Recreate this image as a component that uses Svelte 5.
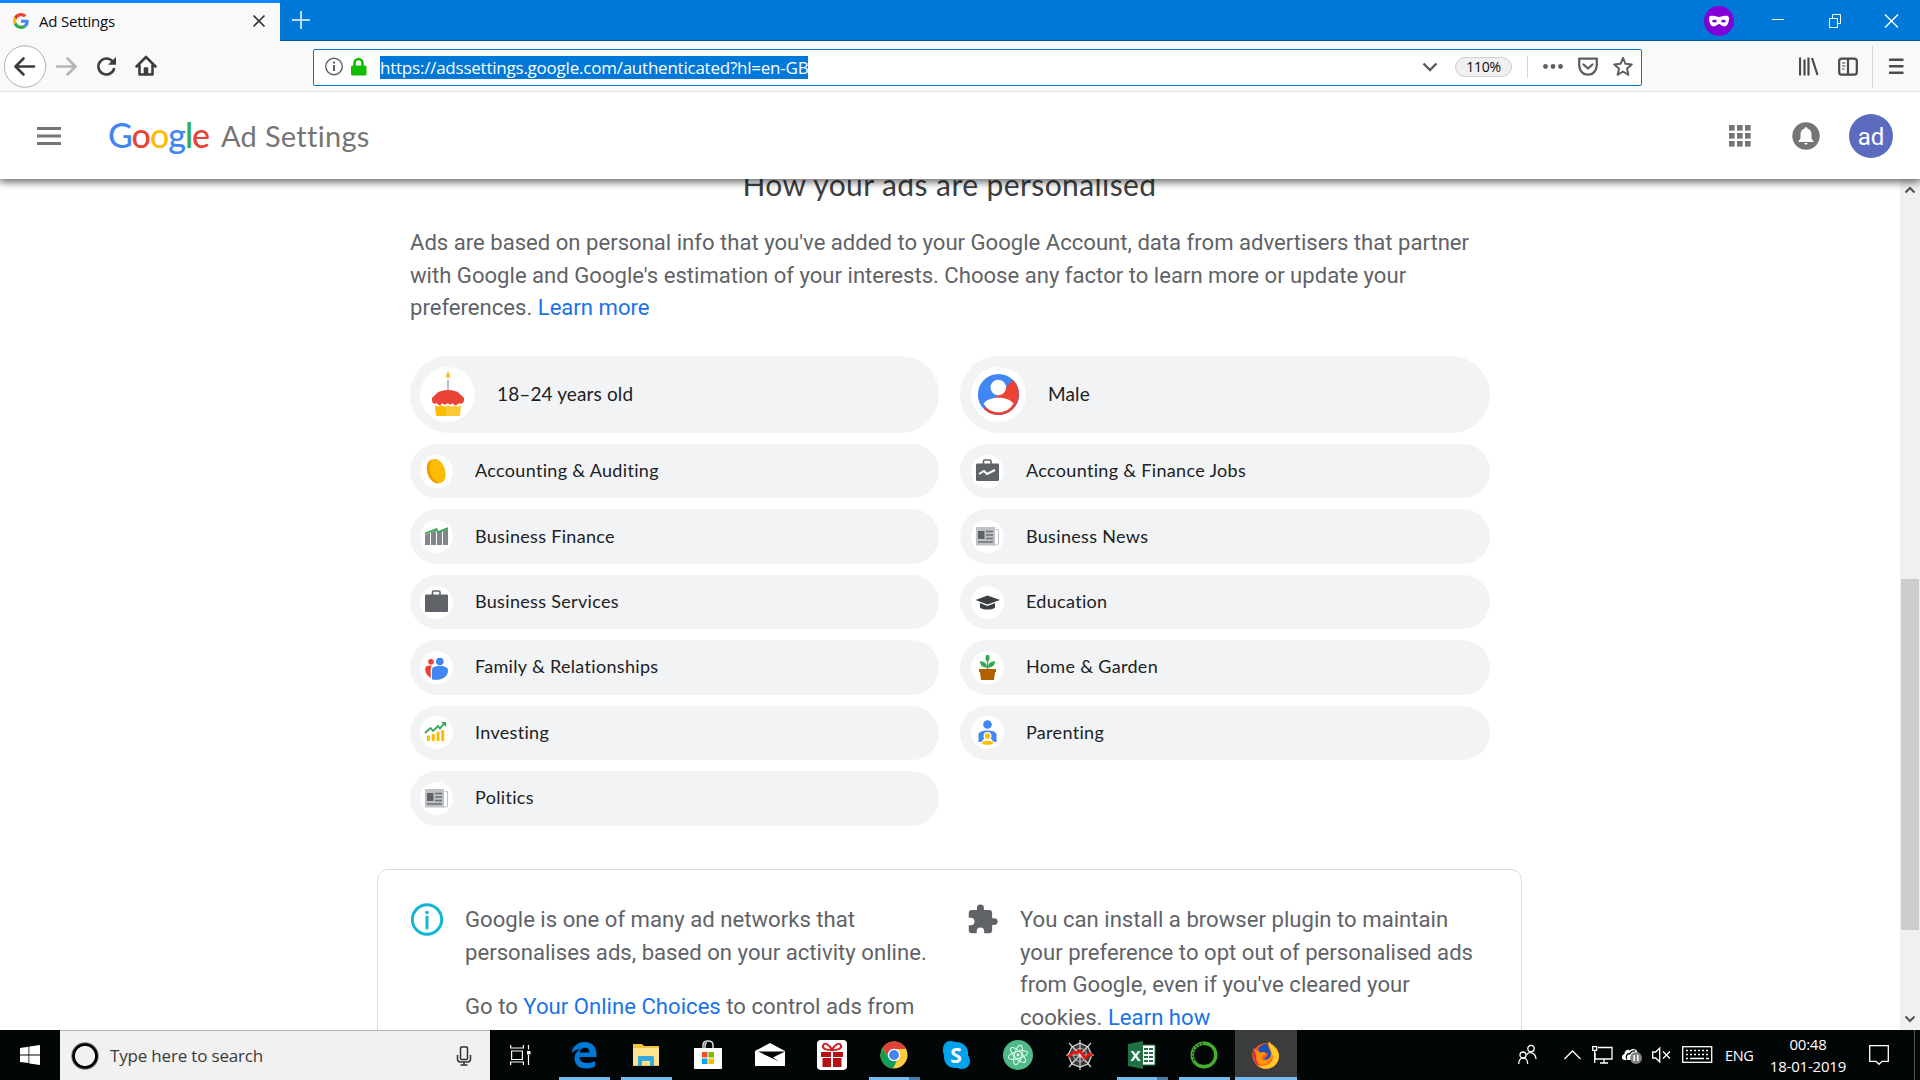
<script>
  const big = [
    { icon: 'cake', label: '18–24 years old' },
    { icon: 'person', label: 'Male' }
  ];
  const chips = [
    { icon: 'coin', label: 'Accounting & Auditing' },
    { icon: 'jobs', label: 'Accounting & Finance Jobs' },
    { icon: 'finance', label: 'Business Finance' },
    { icon: 'news', label: 'Business News' },
    { icon: 'briefcase', label: 'Business Services' },
    { icon: 'education', label: 'Education' },
    { icon: 'family', label: 'Family & Relationships' },
    { icon: 'garden', label: 'Home & Garden' },
    { icon: 'investing', label: 'Investing' },
    { icon: 'parenting', label: 'Parenting' },
    { icon: 'news', label: 'Politics' }
  ];
  const apps = [
    { icon: 'edge', state: 'open' },
    { icon: 'explorer', state: 'open' },
    { icon: 'store', state: '' },
    { icon: 'mail', state: '' },
    { icon: 'gift', state: '' },
    { icon: 'chrome', state: 'open multi' },
    { icon: 'skype', state: '' },
    { icon: 'atom', state: '' },
    { icon: 'spider', state: '' },
    { icon: 'excel', state: 'open multi' },
    { icon: 'anaconda', state: 'open' },
    { icon: 'firefox', state: 'open active' }
  ];
  const dots = [2, 10, 18];
</script>

{#snippet chipIcon(name)}
  {#if name === 'cake'}
    <svg width="55" height="55" viewBox="0 0 55 55">
      <path d="M28 4c2 3 2.300 4.500 1.800 6-.7 1.800-3 1.800-3.600 0-.5-1.500.2-3 1.800-6z" fill="#fbc02d" />
      <path d="M27 13h2v12h-2z" fill="#bdc1c6" />
      <path d="M12 33c-1-3 3-4 4-6 3-3 7-4 12-4s9 1 12 4c1 2 5 3 4 6 0 3-3 5-5 3-2 3-5 3-6 0-2 2-4 2-5 0-2 2-4 2-6 0-1 3-4 3-5 0-3 2-5 0-5-3z" fill="#ea4335" />
      <path d="M15 38c2 2 4 2 6 0 2 2 4 2 7 0 3 2 5 2 7 0 2 2 4 2 6 0l-1 10q0 1-1 1H17q-1 0-1-1z" fill="#fcc934" />
      <path d="M15 38c2 2 4 2 6 0 2 2 4 2 5 1v10h-9q-1 0-1-1z" fill="#fbbc04" />
    </svg>
  {:else if name === 'person'}
    <svg width="55" height="55" viewBox="0 0 55 55">
      <circle cx="27.500" cy="27.500" r="20.600" fill="#4285f4" />
      <path d="M42.100 12.900A20.650 20.650 0 0 1 12.900 42.100z" fill="#ea4335" />
      <circle cx="27.300" cy="20.500" r="7.800" fill="#fff" />
      <path d="M12.500 36.500C16 32 22 30.700 27.500 30.700S39 32 42.500 36.500C39 42.500 33.500 45.300 27.500 45.300S16 42.500 12.500 36.500z" fill="#fff" />
    </svg>
  {:else}
    <svg width="33" height="33" viewBox="0 0 33 33">
      {#if name === 'coin'}
        <ellipse cx="15.200" cy="16.500" rx="8" ry="12.300" transform="rotate(-18 15.200 16.500)" fill="#f29900" />
        <ellipse cx="17.500" cy="16" rx="7.600" ry="12.300" transform="rotate(-18 17.500 16)" fill="#fbbc04" />
      {:else if name === 'jobs' || name === 'briefcase'}
        <path d="M12.500 9V6.200q0-1.200 1.200-1.200h5.100q1.200 0 1.200 1.200V9" fill="none" stroke="#5f6368" stroke-width="1.600" />
        <rect x="5" y="8.500" width="23" height="17.500" rx="1.200" fill="#5f6368" />
        {#if name === 'jobs'}<path d="M8 19l5-3 3 3 8-4" fill="none" stroke="#fff" stroke-width="2" />{/if}
      {:else if name === 'finance'}
        <path d="M5 15l5-2v12H5zM11 12.500l5-2V25h-5zM17 13l5-2v14h-5zM23 11l5-2v16h-5z" fill="#80868b" />
        <path d="M5 13.700l11.500-4.500 1.500 3 10-4" fill="none" stroke="#34a853" stroke-width="1.900" />
      {:else if name === 'news'}
        <path d="M25 9.500h2.500V24q0 1-1 1H23" fill="none" stroke="#bdc1c6" stroke-width="1" />
        <path d="M5 7h19v18.500H6q-1 0-1-1z" fill="#bdc1c6" />
        <path d="M7 11h6.500v8H7z" fill="#5f6368" />
        <path d="M15 11.600h7M15 15h7M15 18.600h7M7 22h15" stroke="#6d7277" stroke-width="1.500" />
      {:else if name === 'education'}
        <path d="M16.500 9.500L29 14 16.500 18.500 4.500 14z" fill="#3c4043" />
        <path d="M9 17l7.500 3 7.500-3v4.500q-2 2-7.500 2t-7.500-2z" fill="#3c4043" />
      {:else if name === 'family'}
        <circle cx="11" cy="10.800" r="2.800" fill="#ea4335" />
        <circle cx="19.800" cy="10.600" r="3.800" fill="#4285f4" />
        <path d="M11 27C6 24 4 19 6 15.500q3-1.300 6-.8c-1.500 2-1.500 4-1 12.300z" fill="#ea4335" />
        <path d="M12 28.500V18c1-3 5-3 8-3 5 0 8 1.500 8 4.500 0 7-8 10.500-16 9z" fill="#4285f4" />
      {:else if name === 'garden'}
        <path d="M16.500 18V9" stroke="#34a853" stroke-width="1.400" />
        <ellipse cx="16.500" cy="7" rx="2" ry="3.200" fill="#34a853" />
        <path d="M16 16.500c-4 0-7-2-7-6.300 4 0 7 2 7 6.300zM17 16.500c0-4.300 3-6.300 7-6.300 0 4.300-3 6.300-7 6.300z" fill="#34a853" />
        <path d="M8 18h17v3h-1l-1 8H10l-1-8H8z" fill="#b06000" />
      {:else if name === 'investing'}
        <path d="M5 17l5.500-5 2.500 3 5-5 2 2.500 4.500-5.500" fill="none" stroke="#34a853" stroke-width="1.800" />
        <path d="M21 6h5v5z" fill="#34a853" />
        <path d="M7 19.500h3V25H7zM11.700 18h3v7h-3zM16.500 16h3v9h-3zM21.200 14h3v11h-3z" fill="#fbbc04" />
      {:else if name === 'parenting'}
        <circle cx="16.500" cy="8.500" r="4.300" fill="#4285f4" />
        <path d="M7.500 26v-8c1-2.500 5-3.500 9-3.500s8 1 9 3.500v8h-3l-2-3h-8l-2 3z" fill="#4285f4" />
        <circle cx="16.500" cy="20" r="4" fill="#fff" />
        <circle cx="16.500" cy="20" r="2.700" fill="#fbbc04" />
        <ellipse cx="16.500" cy="26.800" rx="6.500" ry="2.900" fill="#fff" />
        <ellipse cx="16.500" cy="26.800" rx="5.800" ry="2" fill="#fbbc04" />
      {/if}
    </svg>
  {/if}
{/snippet}

{#snippet appIcon(name)}
  <svg width="30" height="30" viewBox="0 0 30 30">
    {#if name === 'edge'}
      <path d="M2.500 13.500C3.500 6 9 2 15.500 2c8 0 12 5.500 12 12v3H10.500c.3 4 3.500 6 7.800 6 3 0 5.500-.8 7.700-2v5.500c-2.500 1.500-5.500 2-8.700 2C10 28.500 5.500 24.500 5.500 18.500c0-4.500 2.500-7.500 6-9.300-4 0-7 1.700-9 4.300zM10.700 12.500h9.800c0-3-1.500-4.800-4.700-4.800-3 0-4.600 1.800-5.100 4.800z" fill="#0078d7" />
    {:else if name === 'explorer'}
      <path d="M2 5V4h9l2 2h15v20H2z" fill="#f5c33b" />
      <path d="M2 8h26v17H2z" fill="#ffe48f" />
      <path d="M7 26V17q0-1 1-1h14q1 0 1 1v9h-4v-5h-8v5z" fill="#36a9e1" />
    {:else if name === 'store'}
      <path d="M10 9V5q0-4 5-4t5 4v4M12 9V5q0-2 2-2" fill="none" stroke="#ddd" stroke-width="1.500" />
      <path d="M1 8h28v20q0 1-1 1H2q-1 0-1-1z" fill="#fff" />
      <path d="M9 12h5.500v5.500H9z" fill="#f25022" /><path d="M15.500 12H21v5.500h-5.500z" fill="#7fba00" />
      <path d="M9 18.500h5.500V24H9z" fill="#00a4ef" /><path d="M15.500 18.500H21V24h-5.500z" fill="#ffb900" />
    {:else if name === 'mail'}
      <path d="M0 11L15 3l15 8v15H0z" fill="#fff" />
      <path d="M3 11.500h27L18 17.500l6 4z" fill="#050707" />
    {:else if name === 'gift'}
      <rect width="30" height="30" rx="4" fill="#fff" />
      <path d="M15 10C12 4 7 2 6 5.500 5 9 10 10 15 10c5 0 10-1 9-4.500C23 2 18 4 15 10z" fill="none" stroke="#d32128" stroke-width="2" />
      <path d="M4 12h10v5H4zM16 12h10v5H16zM5.500 18H14v9H5.500zM16 18h8.500v9H16z" fill="#b90e14" />
    {:else if name === 'chrome'}
      <circle cx="15" cy="15" r="13.500" fill="#ffcd40" />
      <path d="M3.300 8.200A13.500 13.500 0 0 1 27 9H15a6 6 0 0 0-5.600 8z" fill="#db4437" />
      <path d="M3.300 8.200L10 18a6 6 0 0 0 8 2.300L14 28.500A13.500 13.500 0 0 1 3.300 8.200z" fill="#0f9d58" />
      <circle cx="15" cy="15" r="6.200" fill="#fff" /><circle cx="15" cy="15" r="4.900" fill="#4285f4" />
    {:else if name === 'skype'}
      <path d="M9 1c3 0 4 1 6 1 8 0 13 6 12 13 1 2 2 4 2 6 0 5-4 8-8 8-2 0-3-.5-5-1C7 29 2 22 3 15 0 9 3 1 9 1z" fill="#00a2ea" />
      <text x="15" y="23" text-anchor="middle" class="glyph">S</text>
    {:else if name === 'atom'}
      <circle cx="15" cy="15" r="15" fill="#4fb987" />
      <g fill="none" stroke="#e7fff3" stroke-width="1">
        <ellipse cx="15" cy="15" rx="3.700" ry="10" transform="rotate(15 15 15)" />
        <ellipse cx="15" cy="15" rx="3.700" ry="10" transform="rotate(75 15 15)" />
        <ellipse cx="15" cy="15" rx="3.700" ry="10" transform="rotate(135 15 15)" />
      </g>
      <circle cx="15" cy="15" r="1.400" fill="#fff" />
    {:else if name === 'spider'}
      <path d="M15 3l8 4 4 8-4 9-8 3-8-3-4-9 4-8z" fill="#3c3c3c" stroke="#d5d5d5" stroke-width="1.300" />
      <path d="M15 0v30M1 15h28M4 3l22 24M26 3L4 27" stroke="#d5d5d5" stroke-width="1.200" />
      <circle cx="15" cy="15" r="6.500" fill="none" stroke="#bbb" />
      <path d="M3 17l6-5 3 1 3-2 5 7 5-4 2 2" fill="none" stroke="#e81313" stroke-width="2.800" />
    {:else if name === 'excel'}
      <path d="M15 5h13v20H15z" fill="#fff" stroke="#207245" />
      <path d="M17 9h9M17 13h9M17 17h9M17 21h9" stroke="#207245" stroke-width="2" /><path d="M21.500 7v16" stroke="#fff" />
      <path d="M1 4l15-3v28L1 26z" fill="#207245" />
      <text x="8.500" y="20.500" text-anchor="middle" class="glyph x">X</text>
    {:else if name === 'anaconda'}
      <circle cx="15" cy="15" r="11.800" fill="none" stroke="#43b02a" stroke-width="3.400" />
      <path d="M14 3.500A11.500 11.500 0 0 0 6 22" fill="none" stroke="#0c2408" stroke-width="1.400" stroke-dasharray="1.500 2" />
    {:else if name === 'firefox'}
      <circle cx="15" cy="16" r="13" fill="#ff5722" />
      <path d="M18 1c1 4 10 6 10 15a13 13 0 0 1-22 9c12 3 18-4 15-11-1-4-4-7-3-13z" fill="#ffca28" />
      <path d="M18 1c-2 4 2 7 3 12 2 9-9 15-16 10-5-4-4-10-2-15l4 4c4-1 6 0 8 1-2 4-4 3-5 5 7 3 11-3 8-7-2-3-2-7 0-10z" fill="#ff9100" />
      <path d="M7 9c2-4 7-6 10-5 0 4 3 6 3 10 0 4-4 7-9 5 4 0 5-3 6-5-3-2-6-3-8-1z" fill="#1e50b5" />
      <path d="M3 8c-3 8 0 16 8 19-5-3-6-7-6-12z" fill="#e91e63" />
    {/if}
  </svg>
{/snippet}

<div class="screen">
  <div class="titlebar">
    <div class="tab">
      <svg class="favicon" width="16" height="16" viewBox="0 0 48 48">
        <path fill="#ea4335" d="M24 9.500c3.500 0 6.700 1.200 9.200 3.600l6.900-6.900C35.900 2.400 30.500 0 24 0 14.600 0 6.500 5.400 2.600 13.200l8 6.200C12.400 13.700 17.700 9.500 24 9.500z" />
        <path fill="#4285f4" d="M47 24.600c0-1.600-.2-3.100-.4-4.600H24v9h13c-.6 3-2.300 5.500-4.800 7.200l7.700 6C44.400 38 47 32 47 24.600z" />
        <path fill="#fbbc05" d="M10.500 28.600a14.500 14.500 0 0 1 0-9.200l-8-6.200a24 24 0 0 0 0 21.600z" />
        <path fill="#34a853" d="M24 48c6.500 0 11.900-2.100 15.900-5.800l-7.700-6c-2.200 1.500-4.900 2.300-8.200 2.300-6.300 0-11.600-4.200-13.500-9.900l-8 6.200C6.500 42.600 14.600 48 24 48z" />
      </svg>
      <span class="tab-title">Ad Settings</span>
      <svg class="tab-close" width="14" height="14" viewBox="0 0 14 14"><path d="M1.500 1.500l11 11m0-11l-11 11" stroke="#333" stroke-width="1.700" /></svg>
    </div>
    <svg class="newtab" width="18" height="18" viewBox="0 0 18 18"><path d="M9 0v18M0 9h18" stroke="#b9dcfa" stroke-width="2" /></svg>
    <svg class="mask" width="30" height="30" viewBox="0 0 30 30">
      <circle cx="15" cy="15" r="15" fill="#8000d7" />
      <path d="M5 12c0-2 2-2.500 4-2.200 3 .2 4 1.200 6 1.200s3-1 6-1.200c2-.3 4 .2 4 2.200 0 5-2 8.500-5 8.500-2.500 0-3-2.500-5-2.500s-2.500 2.500-5 2.500c-3 0-5-3.500-5-8.500zM8 15c1 2 4 2 5 0-1-1.800-4-1.800-5 0zm9 0c1 2 4 2 5 0-1-1.800-4-1.800-5 0z" fill="#fff" fill-rule="evenodd" />
    </svg>
    <svg class="win" width="127" height="14" viewBox="0 0 127 14" fill="none" stroke="#fff">
      <path d="M0 5.500h12M57.500 4.500h8v9h-8zM60.500 4V.500h8v9H66" /><path d="M113 .500l13 13m0-13l-13 13" stroke-width="1.400" />
    </svg>
  </div>

  <div class="toolbar">
    <svg class="nav" width="160" height="44" viewBox="0 0 160 44" fill="none" stroke-width="2.600" stroke-linecap="round" stroke-linejoin="round">
      <circle cx="21" cy="21.500" r="20.700" fill="#fff" stroke="#b1b1b3" stroke-width="1" />
      <path d="M30 21.500H12m7.500-8l-8 8 8 8" stroke="#3d3d3f" />
      <path d="M53 21.500h18m-7.500-8l8 8-8 8" stroke="#b5b5b6" />
      <path d="M109 17a8 8 0 1 0 1 7" stroke="#3d3d3f" />
      <path d="M112 12v7.700h-8z" fill="#3d3d3f" />
      <path d="M132.500 21.500l9.500-9.500 9.500 9.500m-16-1v9h13v-9m-7.500 8v-5h2v5" stroke="#3d3d3f" />
    </svg>
    <div class="urlbar">
      <svg class="secure" width="44" height="20" viewBox="0 0 44 20">
        <circle cx="10" cy="9.500" r="8.300" fill="none" stroke="#606060" stroke-width="1.400" />
        <path d="M10 8v6M10 4.500v2" stroke="#606060" stroke-width="2" />
        <path d="M30.500 9.500V6a4 4 0 0 1 8 0v3.500" fill="none" stroke="#12bc00" stroke-width="2.600" />
        <rect x="27" y="8.500" width="15.500" height="10" rx="1.500" fill="#12bc00" />
      </svg>
      <span class="url">https://adssettings.google.com/authenticated?hl=en-GB</span>
      <svg class="drop" width="16" height="10" viewBox="0 0 16 10"><path d="M1.500 1.500L8 8l6.500-6.500" fill="none" stroke="#5a5a5c" stroke-width="2.400" /></svg>
      <span class="zoom">110%</span>
      <svg class="actions" width="92" height="22" viewBox="0 0 92 22" fill="none" stroke="#5f5f61" stroke-width="2.300" stroke-linejoin="round">
        <g fill="#5f5f61" stroke="none"><circle cx="3.500" cy="10.500" r="2.400" /><circle cx="11" cy="10.500" r="2.400" /><circle cx="18.500" cy="10.500" r="2.400" /></g>
        <path d="M37.200 2.700h17.600v7q-1 9-8.800 9t-8.800-9z" /><path d="M41.500 8.500l4.500 4 4.500-4" stroke-linecap="round" />
        <path d="M81 2l2.500 5.800 6.300.6-4.800 4.200 1.400 6.200-5.400-3.300-5.400 3.300 1.400-6.200-4.800-4.200 6.300-.6z" stroke-width="2" />
      </svg>
    </div>
    <svg class="right" width="106" height="42" viewBox="0 0 106 42" fill="none" stroke="#4a4a4c" stroke-width="2.200">
      <path d="M1 11.500v18M5.500 13.500v16M9.500 11.500v18M13 12l5.500 17" />
      <rect x="40.200" y="12.700" width="17.600" height="16" rx="2.500" /><path d="M49 12.500v16" /><path d="M43 17h3.500M43 20h3.500M43 23h2.500" stroke-width="1.200" />
      <path d="M73.500 0v42" stroke="#d7d7db" stroke-width="1" />
      <path d="M91 13.700h12.500M91 20.200h12.500M91 26.700h12.500" stroke-width="2.400" stroke-linecap="round" />
    </svg>
  </div>

  <header>
    <svg class="burger" width="24" height="18" viewBox="0 0 24 18"><path d="M0 1.500h24M0 9h24M0 16.500h24" stroke="#757575" stroke-width="2.800" /></svg>
    <div class="logo"><span class="b">G</span><span class="r">o</span><span class="y">o</span><span class="b">g</span><span class="g">l</span><span class="r">e</span></div>
    <span class="product">Ad Settings</span>
    <svg class="grid" width="22" height="22" viewBox="0 0 22 22" fill="#757575">
      {#each dots as y}{#each dots as x}<rect x={x - 2} y={y - 2} width="5.600" height="5.600" />{/each}{/each}
    </svg>
    <svg class="bell" width="28" height="28" viewBox="0 0 28 28">
      <circle cx="14" cy="14" r="13.700" fill="#757575" />
      <path d="M14 5q1.300 0 1.300 1.500c3 .7 4.200 3 4.200 6V17l2 2v1H6.500v-1l2-2v-4.500c0-3 1.200-5.300 4.200-6Q12.700 5 14 5zM12.300 21h3.400q-.3 1.800-1.700 1.800T12.300 21z" fill="#fff" />
    </svg>
    <span class="avatar">ad</span>
  </header>

  <main>
    <div class="content">
      <h1>How your ads are personalised</h1>
      <p class="intro">Ads are based on personal info that you've added to your Google Account, data from advertisers that partner<br />with Google and Google's estimation of your interests. Choose any factor to learn more or update your<br />preferences. <a>Learn more</a></p>
      <div class="chips">
        {#each big as c}
          <div class="chip large"><span class="disc">{@render chipIcon(c.icon)}</span><span class="label">{c.label}</span></div>
        {/each}
        {#each chips as c}
          <div class="chip"><span class="disc">{@render chipIcon(c.icon)}</span><span class="label">{c.label}</span></div>
        {/each}
      </div>
      <section class="card">
        <div class="note">
          <svg width="33" height="33" viewBox="0 0 33 33"><circle cx="16" cy="16.500" r="14.700" fill="none" stroke="#12b5d3" stroke-width="3" /><path d="M16 14v11" stroke="#12b5d3" stroke-width="3" stroke-linecap="round" /><circle cx="16" cy="9.500" r="1.800" fill="#12b5d3" /></svg>
          <div>
            <p>Google is one of many ad networks that<br />personalises ads, based on your activity online.</p>
            <p>Go to <a>Your Online Choices</a> to control ads from</p>
          </div>
        </div>
        <div class="note second">
          <svg width="33" height="33" viewBox="0 0 24 24"><path d="M20.500 11H19V7c0-1.100-.9-2-2-2h-4V3.500a2.500 2.500 0 0 0-5 0V5H4c-1.100 0-2 .9-2 2v3.800h1.500a2.700 2.700 0 0 1 0 5.400H2V20c0 1.100.9 2 2 2h3.800v-1.500a2.700 2.700 0 0 1 5.400 0V22H17c1.100 0 2-.9 2-2v-4h1.500a2.500 2.500 0 0 0 0-5z" fill="#5f6368" /></svg>
          <div>
            <p>You can install a browser plugin to maintain<br />your preference to opt out of personalised ads<br />from Google, even if you've cleared your<br />cookies. <a>Learn how</a></p>
          </div>
        </div>
      </section>
    </div>
    <div class="scrollbar">
      <svg width="12" height="8" viewBox="0 0 12 8"><path d="M1.500 6.500L6 2l4.500 4.500" fill="none" stroke="#505050" stroke-width="2" /></svg>
      <div class="thumb"></div>
      <svg class="down" width="12" height="8" viewBox="0 0 12 8"><path d="M1.500 1.500L6 6l4.500-4.500" fill="none" stroke="#505050" stroke-width="2" /></svg>
    </div>
  </main>

  <footer>
    <div class="start"><svg width="20" height="20" viewBox="0 0 20 20"><path d="M0 3l8.500-1.200v7.700H0zM9.300 1.600L20 0v9.500H9.300zM0 10.400h8.500v7.700L0 17zM9.300 10.400H20V20L9.300 18.400z" fill="#fff" /></svg></div>
    <div class="search">
      <svg width="28" height="28" viewBox="0 0 28 28"><circle cx="14" cy="14" r="12" fill="none" stroke="#777" stroke-width="3.400" /><circle cx="14" cy="14" r="11.500" fill="none" stroke="#000" stroke-width="2.600" /></svg>
      <span>Type here to search</span>
      <svg class="mic" width="16" height="20" viewBox="0 0 16 20" fill="none" stroke="#333" stroke-width="1.500"><rect x="4.500" y="1" width="7" height="12.500" rx="1" /><path d="M1.500 9v4q0 3 3 3h7q3 0 3-3V9M8 16v3M4.500 19h7" /></svg>
    </div>
    <div class="app taskview">
      <svg width="21" height="20" viewBox="0 0 21 20" fill="none" stroke="#fff" stroke-width="1.200"><path d="M.6 0v3h12.800V0M1.600 6h10.800v8.500H1.600zM.6 20v-3h12.800v3M18.500 0v4.500M18.500 10v10" /><path d="M17 6h3.500v3.500H17z" fill="#fff" stroke="none" /></svg>
    </div>
    {#each apps as a}
      <div class="app {a.state}">{@render appIcon(a.icon)}</div>
    {/each}
    <svg class="tray" width="195" height="22" viewBox="0 0 195 22" fill="none" stroke="#fff" stroke-width="1.300">
      <circle cx="5" cy="11" r="3" /><path d="M.7 20c0-8 9-8 9 0" /><circle cx="13" cy="4.500" r="3.200" /><path d="M8.500 11c2-4 9-3 9.500 4" />
      <path d="M46.500 15l8-8 8 8" />
      <path d="M80 3.500h14v11.500H77V9M82 19h8m-4-4v4" /><path d="M74.700 2.700h4v3.600h-4zM76.700 6.500V19" />
      <path d="M107 16c-4 0-4-5-.5-6 0-4 4-5 5.500-3.500 3-3 7-1 7.500 2 3 .5 3 7.500 0 7.500z" fill="#fff" stroke="none" /><path d="M109 15.500c-2-3 0-6 3-6 1-2 3-3 5-2.500" stroke="#030607" /><circle cx="118" cy="14" r="6" fill="#858585" stroke="none" /><path d="M116.200 11v6m3.600-6v6" stroke-width="1.500" />
      <path d="M134.700 8h3l4-4v14l-4-4h-3zM145 7.500l7 7m0-7l-7 7" />
      <rect x="164.700" y="2.700" width="29" height="15.600" /><path d="M168 6.500h23M168 10.500h23" stroke-dasharray="2 2" /><path d="M168 14.500h2m2 0h14m2 0h3" />
    </svg>
    <span class="lang">ENG</span>
    <div class="clock"><span>00:48</span><span class="date">18-01-2019</span></div>
    <svg class="action" width="20" height="20" viewBox="0 0 20 20"><path d="M.7.7h18.600v15.600H13l-3 3-3-3H.7z" fill="none" stroke="#fff" stroke-width="1.300" /></svg>
    <span class="peek"></span>
  </footer>
</div>

<style>
  :global(body) { margin: 0; overflow: hidden; background: #fff; }
  .screen { width: 1920px; height: 1080px; overflow: hidden; display: flex; flex-direction: column; font-family: "Open Sans", "Noto Sans", sans-serif; }
  svg { display: block; flex: none; }
  span { white-space: nowrap; }

  .titlebar { box-sizing: border-box; height: 41px; flex: none; display: flex; align-items: flex-start; background: #0078d7; border-bottom: 1px solid #00549a; }
  .tab { box-sizing: border-box; width: 280px; height: 41px; display: flex; align-items: center; border-top: 3px solid #0a84ff; background: #f9f9fa; padding: 0 14px 2px 13px; }
  .tab-title { margin-left: 10px; font-size: 15px; letter-spacing: -0.2px; color: #0c0c0d; flex: 1; }
  .newtab { margin: 11px 0 0 12px; }
  .mask { margin: 6px 0 0 auto; }
  .win { margin: 14px 21px 0 38px; }

  .toolbar { box-sizing: border-box; position: relative; z-index: 3; height: 51px; flex: none; display: flex; align-items: center; padding-top: 2px; background: #f9f9fa; border-bottom: 1px solid #e0e0e1; }
  .nav { margin-left: 4px; }
  .urlbar { box-sizing: border-box; width: 1329px; height: 37px; margin-left: 149px; display: flex; align-items: center; background: #fff; border: 1px solid #0078d7; border-radius: 2px; padding-left: 10px; }
  .url { margin-left: 12px; width: 428px; height: 23px; line-height: 23px; font-size: 17px; letter-spacing: -0.23px; background: #0078d7; color: #fff; }
  .drop { margin-left: 614px; }
  .zoom { box-sizing: border-box; width: 57px; height: 20px; margin-left: 17px; line-height: 18px; text-align: center; font-size: 14px; letter-spacing: -0.3px; border: 1px solid #cfcfd1; border-radius: 10px; background: #f0f0f1; color: #0c0c0d; }
  .actions { margin-left: 15px; padding-left: 14px; border-left: 1px solid #d7d7db; }
  .right { margin-left: 157px; }

  header { box-sizing: border-box; position: relative; z-index: 2; height: 87px; flex: none; display: flex; align-items: center; padding: 0 27px 0 37px; background: #fff; box-shadow: 0 2px 8px 1px rgba(0, 0, 0, 0.6); }
  .logo { width: 101px; margin-left: 47px; padding-bottom: 2px; font: 500 34px/44px Lato, sans-serif; letter-spacing: -1px; white-space: nowrap; }
  .b { color: #4285f4; } .r { color: #ea4335; } .y { color: #fbbc05; } .g { color: #34a853; }
  .product { margin-left: 12px; font: 29px/44px Lato, sans-serif; letter-spacing: 0.3px; color: #757575; }
  .grid { margin-left: auto; }
  .bell { margin-left: 41px; }
  .avatar { width: 44px; height: 44px; margin-left: 29px; border-radius: 50%; background: #5c6bc0; color: #fff; font: 24px/46px Roboto, sans-serif; text-align: center; }

  main { flex: 1; min-height: 0; display: flex; justify-content: space-between; overflow: hidden; }
  .content { width: 1145px; margin-left: 377px; }
  h1 { margin: -15px 0 0; text-align: center; font: 400 30px/40px Lato, sans-serif; letter-spacing: 0.42px; color: #3c4043; }
  p { margin: 0; font: 22.100px/32.730px Roboto, sans-serif; color: #5f6368; white-space: nowrap; }
  a { color: #1a73e8; }
  .intro { margin: 22px 0 0 33px; }
  .chips { display: grid; grid-template-columns: 529px 530px; column-gap: 21px; row-gap: 10.900px; margin: 31.800px 0 0 33px; }
  .chip { box-sizing: border-box; height: 54.550px; display: flex; align-items: center; padding-left: 10px; border-radius: 28px; background: #f1f3f4; }
  .chip:nth-child(even) { padding-left: 11px; }
  .chip.large { height: 77px; border-radius: 39px; }
  .disc { border-radius: 50%; background: #fff; }
  .label { margin-left: 22px; padding-bottom: 2px; font: 18px/24px Lato, sans-serif; letter-spacing: 0.32px; color: #202124; }
  .large .label { padding-bottom: 1px; font-size: 19px; letter-spacing: 0.12px; }
  .card { box-sizing: border-box; height: 260px; margin-top: 43.300px; display: flex; border: 1px solid #dadce0; border-radius: 11px; padding: 33px 0 0 33px; }
  .note { display: flex; width: 555px; gap: 21px; }
  .note p { margin-bottom: 22px; letter-spacing: 0.02px; }

  .scrollbar { box-sizing: border-box; width: 20px; display: flex; flex-direction: column; align-items: center; padding: 7px 0; background: #f0f0f0; }
  .thumb { flex: none; width: 18px; height: 351px; margin-top: 385px; background: #cdcdcd; }
  .down { margin-top: auto; }

  footer { height: 50px; flex: none; display: flex; align-items: center; background: #030607; color: #fff; }
  .start { width: 60px; display: flex; justify-content: center; }
  .search { box-sizing: border-box; width: 430px; height: 50px; display: flex; align-items: center; padding: 0 18px 0 11px; border-top: 1px solid #b5b5b5; background: #f1f1f1; }
  .search span { margin-left: 11px; flex: 1; font-size: 17px; letter-spacing: -0.18px; color: #3a3a3a; }
  .app { box-sizing: border-box; width: 62px; height: 50px; display: flex; align-items: center; justify-content: center; flex: none; }
  .app.taskview { width: 60px; margin-right: 3px; }
  .app.open { background: linear-gradient(#76b9ed, #76b9ed) 50% 100% / 51px 3px no-repeat; }
  .app.multi { background: linear-gradient(90deg, #76b9ed 40px, #4d7ba3 40px) 50% 100% / 51px 3px no-repeat; }
  .app.active { background: linear-gradient(#76b9ed, #76b9ed) 0 100% / 100% 3px no-repeat, #3a3c3d; }
  .glyph { font: 700 21px "Open Sans", sans-serif; fill: #fff; }
  .glyph.x { font-size: 15px; }
  .tray { margin-left: 221px; }
  .lang { width: 28px; margin-left: 12px; font-size: 14.500px; letter-spacing: -0.3px; }
  .clock { width: 76px; margin-left: 17px; display: flex; flex-direction: column; align-items: center; font-size: 15px; line-height: 22px; letter-spacing: -0.2px; }
  .action { margin-left: 23px; }
  .peek { width: 1px; height: 50px; margin-left: 25px; background: #555; }
</style>
